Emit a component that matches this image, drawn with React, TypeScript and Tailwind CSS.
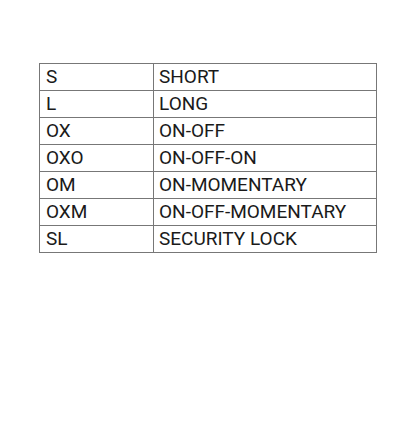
const rows: [string, string][] = [
  ['S', 'SHORT'],
  ['L', 'LONG'],
  ['OX', 'ON-OFF'],
  ['OXO', 'ON-OFF-ON'],
  ['OM', 'ON-MOMENTARY'],
  ['OXM', 'ON-OFF-MOMENTARY'],
  ['SL', 'SECURITY LOCK'],
];

export default function App() {
  return (
    <div className="min-h-[435px] w-[416px] bg-white pt-[63px] pl-[39px] font-['Roboto',sans-serif] text-[19px] leading-[26px] text-[#1a1a1a]">
      <table className="w-[338px] border-collapse">
        <tbody>
          {rows.map(([code, label]) => (
            <tr key={code}>
              <td className="w-[114px] border border-[#777] px-[6px] py-0">{code}</td>
              <td className="border border-[#777] pl-[5px] pr-[6px] py-0">{label}</td>
            </tr>
          ))}
        </tbody>
      </table>
    </div>
  );
}
